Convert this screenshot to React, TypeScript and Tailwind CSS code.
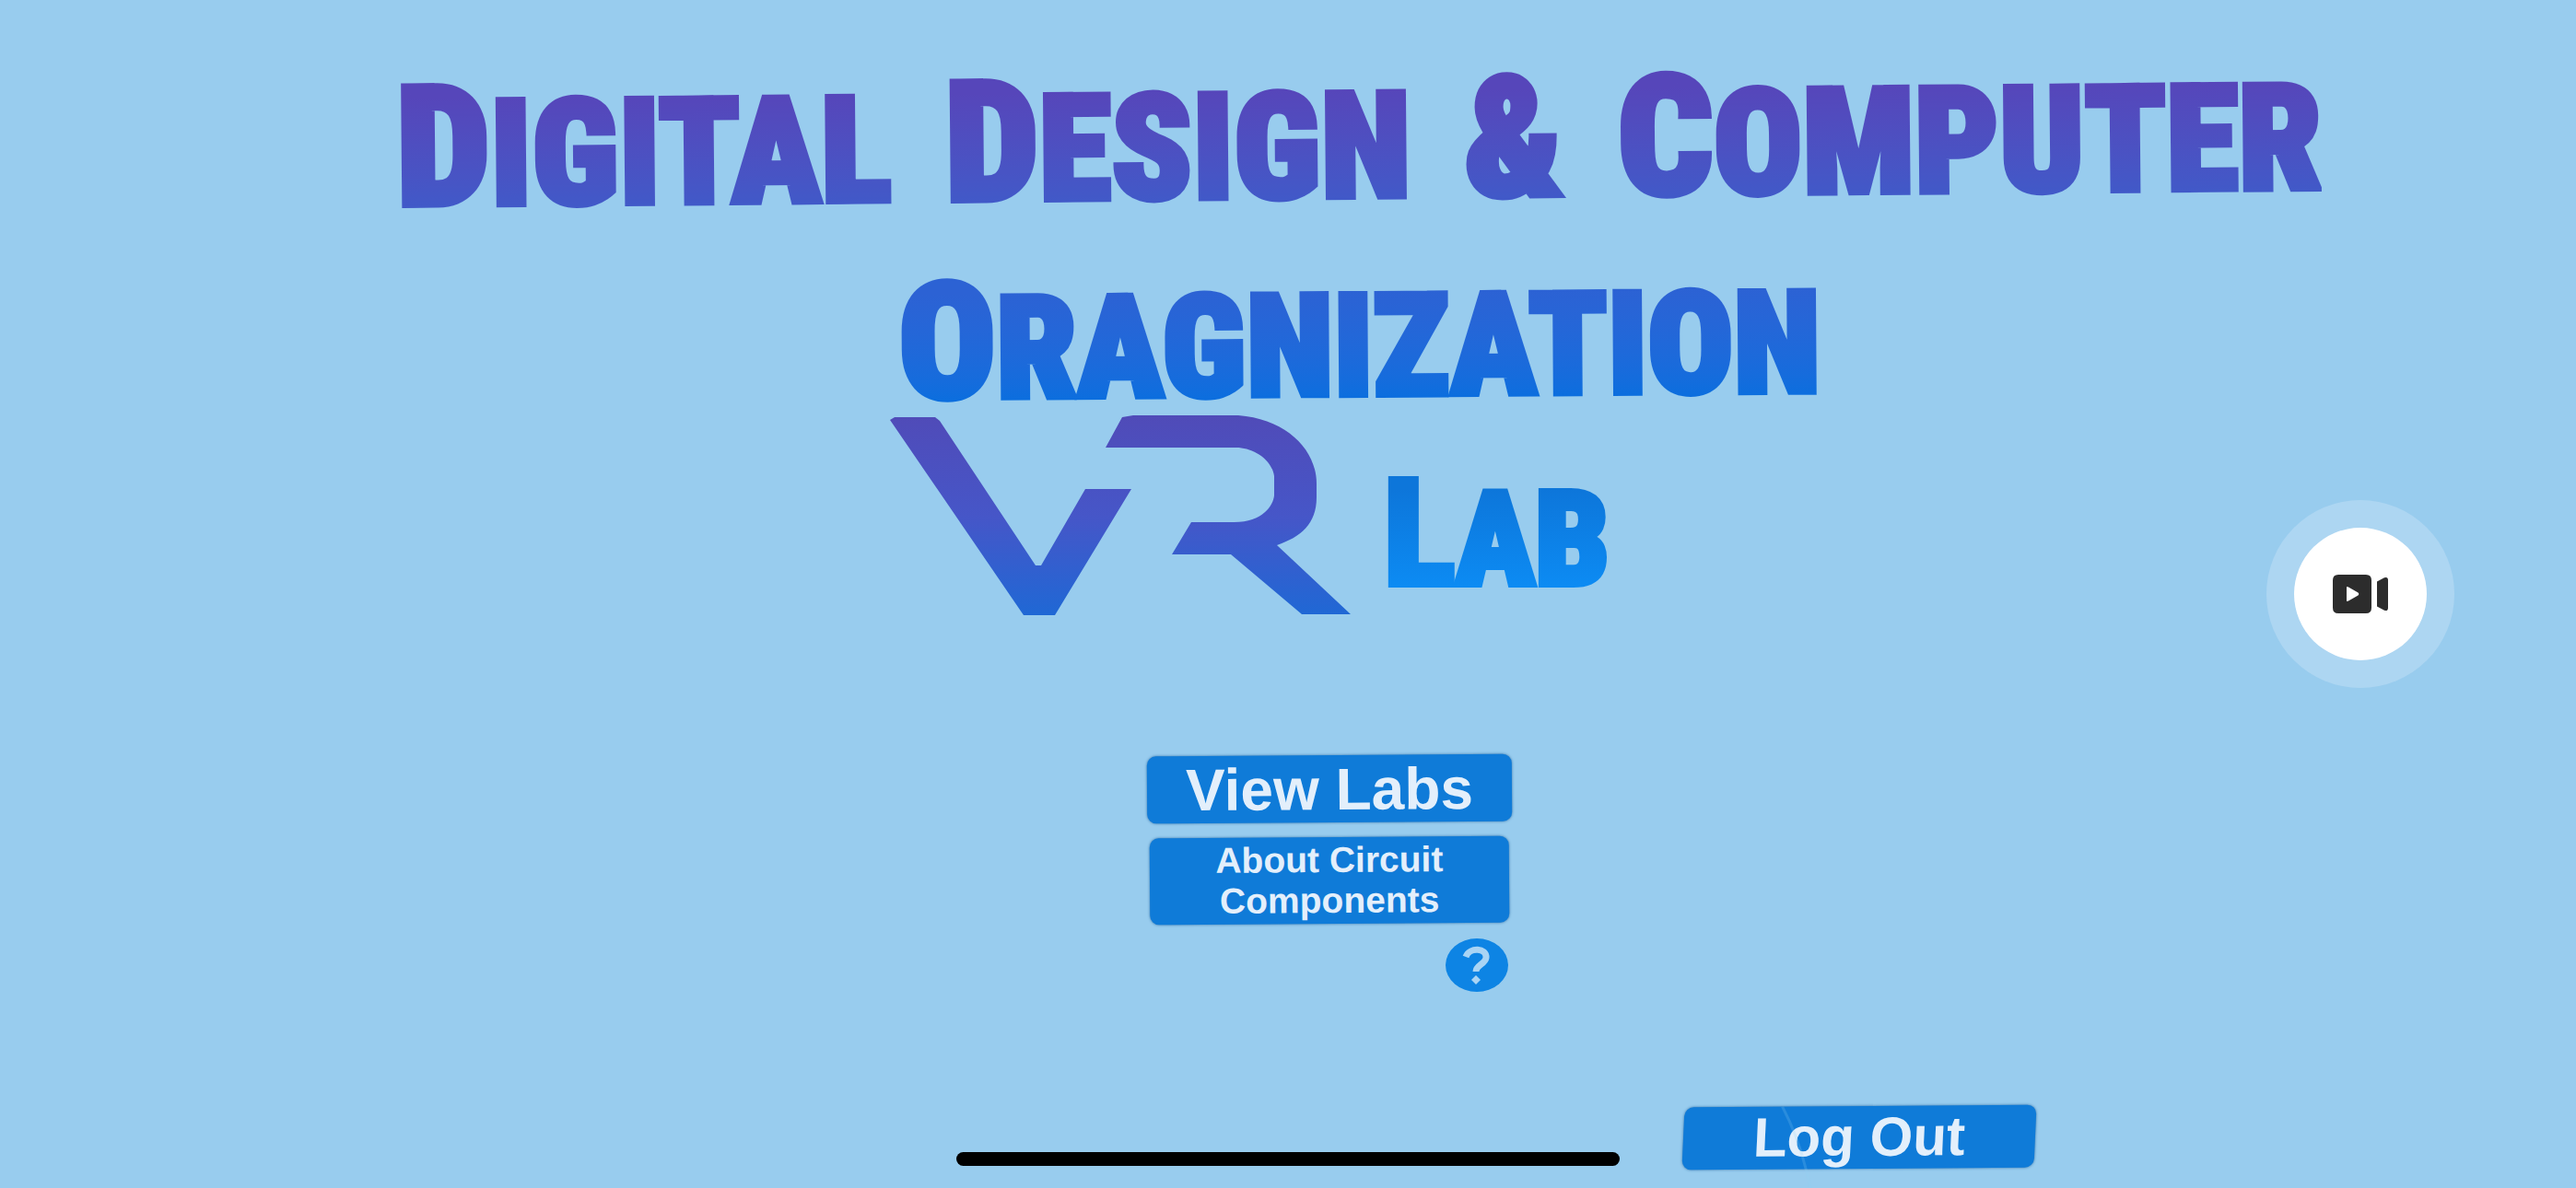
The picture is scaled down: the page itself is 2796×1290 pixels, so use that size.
import React from "react";

type WordProps = { first: string; rest?: string };

function Word({ first, rest }: WordProps) {
  return (
    <span className="px-2">
      {first}
      {rest && <span className="text-[0.88em]">{rest}</span>}
    </span>
  );
}

const heading =
  "font-['Roboto_Condensed',Roboto,sans-serif] font-black uppercase leading-none whitespace-nowrap bg-clip-text text-transparent [-webkit-text-stroke:6px_transparent] bg-linear-to-b";

const menuButton =
  "flex items-center justify-center rounded-[10px] bg-[#0f7bd8] font-bold text-[#e3effb] shadow-[0_0_3px_#2f6fa8] -rotate-[0.4deg]";

function VRLogo() {
  return (
    <svg viewBox="0 0 500 218" className="h-[218px] w-[500px] shrink-0" role="img" aria-label="VR">
      <defs>
        <linearGradient id="vr" x1="0" y1="0" x2="0" y2="218" gradientUnits="userSpaceOnUse">
          <stop offset="0" stopColor="#504bb8" />
          <stop offset="0.5" stopColor="#4656c8" />
          <stop offset="1" stopColor="#1f68d5" />
        </linearGradient>
      </defs>
      <g fill="url(#vr)">
        <path d="M0 5L5 2H49L54 6L158 163H164L212 80H262L179 217H145Z" />
        <path d="M252 2L264 0H378C431 4 463 38 463 74V89C463 118 446 132 420 141L500 216H447L370 151H306L327 116H371C404 117 416 98 417 87V66C414 46 392 35 376 35H234Z" />
      </g>
    </svg>
  );
}

export default function App() {
  return (
    <main className="relative flex min-h-screen flex-col items-center overflow-hidden bg-[#98ccee] font-['Liberation_Sans',Arial,sans-serif]">
      <h1 className="flex flex-col items-center pt-[61px]">
        <span className="flex flex-col items-center gap-[38px] pl-[154px]">
          <span className={`${heading} -rotate-[0.5deg] from-[#5646ba] from-20% to-[#4159c8] to-85% text-[182px]`}>
            <Word first="D" rest="igital" /> <Word first="D" rest="esign" /> <Word first="&" />{" "}
            <Word first="C" rest="omputer" />
          </span>
          <span className={`${heading} -rotate-[0.4deg] from-[#2c62d4] from-20% to-[#0c6ede] to-85% text-[176px]`}>
            <Word first="O" rest="ragnization" />
          </span>
        </span>
        <span className="-mt-[6px] flex items-end gap-[28px] pr-[75px]">
          <VRLogo />
          <span className={`${heading} mb-2 from-[#0d76da] from-20% to-[#0c8bf3] to-85% text-[162px]`}>
            <Word first="L" rest="ab" />
          </span>
        </span>
      </h1>

      <nav className="mt-[151px] flex flex-col items-center gap-4 pl-[90px]">
        <button type="button" className={`${menuButton} h-[73px] w-[396px] text-[64px] leading-none`}>
          View Labs
        </button>
        <button type="button" className={`${menuButton} h-[94px] w-[390px] px-12 text-[39px] leading-[44px]`}>
          About Circuit Components
        </button>
        <button type="button" aria-label="Help" className="mr-1 self-end">
          <svg viewBox="0 0 68 58" className="h-[58px] w-[68px]" aria-hidden="true">
            <ellipse cx="34" cy="29" rx="34" ry="29" fill="#0d84e4" />
            <path d="M22 20C26 9 45 10 44 21C43 28 33 29 33 36" fill="none" stroke="#a9d4f4" strokeWidth="7" />
            <path d="M33 40L38 45L33 50L28 45Z" fill="#a9d4f4" />
          </svg>
        </button>
      </nav>

      <footer className="mt-auto flex w-full justify-end pr-[21%] pb-[21px]">
        <button type="button" className={`${menuButton} relative h-[68px] w-[382px] -skew-x-3 text-[60px] leading-none`}>
          Log Out
          <svg viewBox="0 0 40 96" className="pointer-events-none absolute top-0 left-[104px] h-24 w-10" aria-hidden="true">
            <path d="M2 0Q26 42 38 96" fill="none" stroke="#8fd0f5" strokeOpacity="0.2" strokeWidth="3" />
          </svg>
        </button>
      </footer>

      <button
        type="button"
        aria-label="Record video"
        className="absolute top-1/2 right-[132px] flex size-[204px] -translate-y-1/2 items-center justify-center rounded-full bg-[#add6f2]"
      >
        <span className="flex size-36 items-center justify-center rounded-full bg-white">
          <svg viewBox="0 0 60 42" className="h-[42px] w-[60px]" aria-hidden="true" fill="#2c2c2c">
            <path
              fillRule="evenodd"
              d="M6 0H36Q42 0 42 6V36Q42 42 36 42H6Q0 42 0 36V6Q0 0 6 0ZM15 14V28Q15 29.500 17 28.500L27.500 22.500Q29 21 27.500 19.500L17 13.500Q15 12.500 15 14Z"
            />
            <path d="M48 7.500L56 3.200Q60 2 60 6V36Q60 40 56 38.800L48 34.500Z" />
          </svg>
        </span>
      </button>

      <div className="absolute bottom-6 left-1/2 h-[15px] w-[720px] -translate-x-1/2 rounded-full bg-black" />
    </main>
  );
}
